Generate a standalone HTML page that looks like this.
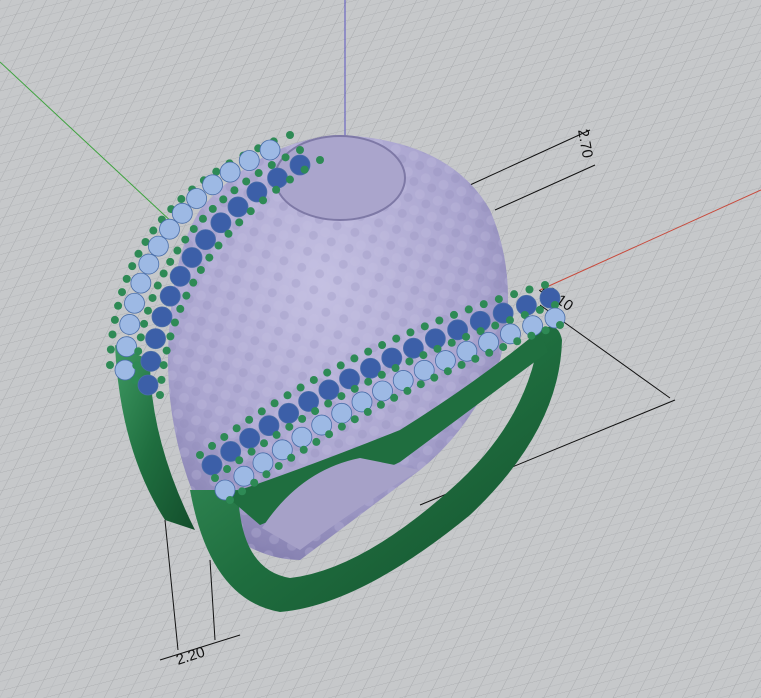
<!DOCTYPE html>
<html><head><style>
html,body{margin:0;padding:0;width:761px;height:698px;overflow:hidden;background:#c5c7c9}
svg{display:block}
text{font-family:"Liberation Sans",sans-serif;font-size:15px;fill:#111}
</style></head><body>
<svg id="s" width="761" height="698" viewBox="0 0 761 698" xmlns="http://www.w3.org/2000/svg">
<defs>
<radialGradient id="pur" cx="45%" cy="35%" r="65%">
<stop offset="0" stop-color="#c4c0e2"/><stop offset="0.7" stop-color="#aaa5cf"/><stop offset="1" stop-color="#8782b2"/></radialGradient>
<linearGradient id="grn" x1="0" y1="0" x2="1" y2="1">
<stop offset="0" stop-color="#3f9a63"/><stop offset="0.5" stop-color="#1f6e3f"/><stop offset="1" stop-color="#134d2b"/></linearGradient>
<pattern id="g1" width="22" height="22" patternUnits="userSpaceOnUse" patternTransform="skewX(-40) rotate(-18)">
<path d="M0 0H22M0 0V22" stroke="#a8aaad" stroke-width="1" fill="none"/>
<path d="M0 11H22M11 0V22" stroke="#b8babd" stroke-width="0.6" fill="none"/>
</pattern>
<pattern id="tex" width="19" height="17" patternUnits="userSpaceOnUse" patternTransform="rotate(20)">
<circle cx="5" cy="5" r="5" fill="#c6c2e2"/><circle cx="14" cy="12" r="4.5" fill="#8d88b6"/>
</pattern>
</defs>
<rect width="761" height="698" fill="#c6c8ca"/>
<rect width="761" height="698" fill="url(#g1)"/>
<line x1="345" y1="0" x2="345" y2="250" stroke="#5a55c0" stroke-width="1"/>
<line x1="0" y1="62" x2="175" y2="225" stroke="#3fa33f" stroke-width="1"/>
<line x1="540" y1="290" x2="761" y2="190" stroke="#c84a3c" stroke-width="1"/>
<g stroke="#111" stroke-width="1" fill="none">
<line x1="470" y1="185" x2="590" y2="130"/><line x1="495" y1="210" x2="595" y2="165"/>
<line x1="540" y1="305" x2="670" y2="398"/><line x1="420" y1="505" x2="675" y2="400"/>
<line x1="165" y1="520" x2="178" y2="650"/><line x1="210" y1="560" x2="215" y2="640"/>
<line x1="160" y1="660" x2="240" y2="635"/>
</g>
<text x="578" y="130" transform="rotate(80 578 130)">2.70</text>
<text x="538" y="290" transform="rotate(35 538 290)">19.10</text>
<text x="178" y="665" transform="rotate(-18 178 665)">2.20</text>
<path d="M200 210 Q260 140 340 135 Q450 140 490 210 Q520 280 500 360 Q470 430 420 470 L300 560 Q250 560 200 510 Q160 420 170 320 Q175 250 200 210Z" fill="url(#pur)"/>
<path d="M200 210 Q260 140 340 135 Q450 140 490 210 Q520 280 500 360 Q470 430 420 470 L300 560 Q250 560 200 510 Q160 420 170 320 Q175 250 200 210Z" fill="url(#tex)" opacity="0.25"/>
<ellipse cx="340" cy="178" rx="65" ry="42" fill="#aaa5cc" stroke="#7e79a6" stroke-width="2"/>
<path d="M115 345 Q120 450 165 520 L195 530 Q150 440 150 360 Z" fill="url(#grn)"/>
<path d="M190 490 Q210 600 280 612 Q360 605 470 515 Q560 430 562 340 Q558 320 540 330 Q530 420 450 490 Q360 570 290 578 Q240 570 238 490 Z" fill="url(#grn)"/>
<path d="M225 495 Q300 470 400 430 Q480 380 540 330 L548 352 Q470 410 400 462 Q310 505 260 525 Z" fill="#1f6e3f"/>
<path d="M262 528 Q300 470 360 458 L420 470 Q360 505 300 550 Z" fill="#a6a1c8"/>
<g id="stones"></g>
</svg>
<script>
var g=document.getElementById('stones'),ns='http://www.w3.org/2000/svg';
function q(p0,p1,p2,t){var u=1-t;return[u*u*p0[0]+2*u*t*p1[0]+t*t*p2[0],u*u*p0[1]+2*u*t*p1[1]+t*t*p2[1]];}
function row(p0,p1,p2,n,r,fill){for(var i=0;i<n;i++){var t=i/(n-1),p=q(p0,p1,p2,t);
var c=document.createElementNS(ns,'circle');c.setAttribute('cx',p[0]);c.setAttribute('cy',p[1]);c.setAttribute('r',r);c.setAttribute('fill',fill);c.setAttribute('stroke','#4a6ea8');c.setAttribute('stroke-width','0.8');g.appendChild(c);}}
function prongs(p0,p1,p2,n){for(var i=0;i<n;i++){var t=i/(n-1),p=q(p0,p1,p2,t);
var c=document.createElementNS(ns,'circle');c.setAttribute('cx',p[0]);c.setAttribute('cy',p[1]);c.setAttribute('r',4);c.setAttribute('fill','#2e8a55');g.appendChild(c);}}
prongs([110,365],[115,200],[290,135],22);
row([125,370],[130,215],[270,150],14,10,'#9db9e4');
prongs([135,380],[145,225],[300,150],22);
row([148,385],[160,240],[300,165],13,10,'#3c5fa8');
prongs([160,395],[170,250],[320,160],20);
prongs([200,455],[350,340],[545,285],26);
row([212,465],[360,355],[550,298],17,10,'#3c5fa8');
prongs([215,478],[365,365],[555,305],26);
row([225,490],[375,378],[555,318],17,10,'#9db9e4');
prongs([230,500],[380,390],[560,325],26);
</script>
</body></html>
